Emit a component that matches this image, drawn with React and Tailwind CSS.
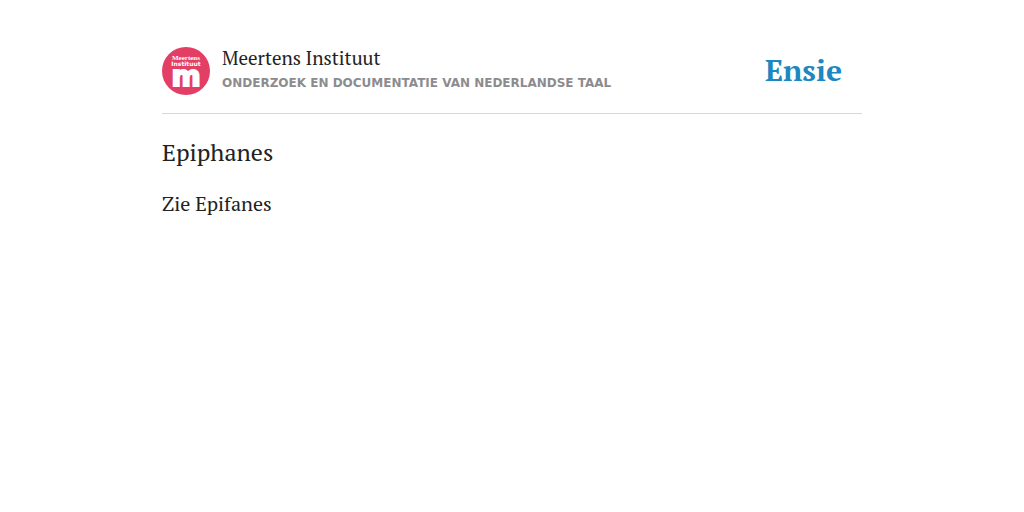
import React from "react";

const MeertensLogo = () => (
  <svg
    className="h-12 w-12 shrink-0"
    viewBox="0 0 48 48"
    role="img"
    aria-label="Meertens Instituut"
  >
    <circle cx="24" cy="24" r="24" fill="#e33e64" />
    <g fill="#fff" textAnchor="middle">
      <text
        x="24"
        y="13"
        fontSize="7"
        fontWeight="700"
        fontFamily="'Liberation Serif', serif"
      >
        Meertens
      </text>
      <text
        x="24"
        y="19"
        fontSize="6"
        fontWeight="700"
        fontFamily="'DejaVu Sans', sans-serif"
      >
        Instituut
      </text>
      <text
        x="24"
        y="38.5"
        fontSize="28"
        fontWeight="700"
        fontFamily="'DejaVu Sans', sans-serif"
        stroke="#fff"
        strokeWidth="2"
      >
        m
      </text>
    </g>
  </svg>
);

const App = () => {
  return (
    <div className="mx-auto w-full max-w-[700px] pt-[46px] font-['PT_Serif','Liberation_Serif',serif] text-[#222]">
      <header className="flex items-start justify-between border-b border-[#d8d8dc] pb-[18px]">
        <div className="flex items-start gap-3">
          <div className="pt-px">
            <MeertensLogo />
          </div>
          <div>
            <div className="text-[19px] leading-6">Meertens Instituut</div>
            <div className="mt-1 font-['DejaVu_Sans',sans-serif] text-xs leading-[18px] font-bold text-[#8c8c90] uppercase">
              Onderzoek en documentatie van Nederlandse taal
            </div>
          </div>
        </div>
        <a
          href="#"
          className="mr-5 pt-1 text-[30px] leading-10 font-bold text-[#1c87c0]"
        >
          Ensie
        </a>
      </header>
      <main>
        <h1 className="mt-6 text-2xl leading-7">Epiphanes</h1>
        <p className="mt-5 text-xl leading-9">Zie Epifanes</p>
      </main>
    </div>
  );
};

export default App;
